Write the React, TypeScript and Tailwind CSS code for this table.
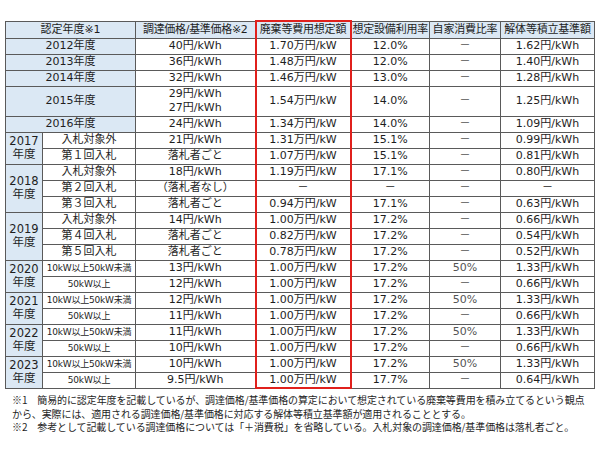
import React from 'react';

type Row = {
  year?: string;
  yearSpan?: number;
  label?: string;
  small?: boolean;
  price: React.ReactNode;
  cost: string;
  rate: string;
  self: string;
  fund: string;
  tall?: boolean;
};

const D = '－';

const rows: Row[] = [
  { year: '2012年度', price: '40円/kWh', cost: '1.70万円/kW', rate: '12.0%', self: D, fund: '1.62円/kWh' },
  { year: '2013年度', price: '36円/kWh', cost: '1.48万円/kW', rate: '12.0%', self: D, fund: '1.40円/kWh' },
  { year: '2014年度', price: '32円/kWh', cost: '1.46万円/kW', rate: '13.0%', self: D, fund: '1.28円/kWh' },
  {
    year: '2015年度',
    price: (
      <>
        29円/kWh
        <br />
        27円/kWh
      </>
    ),
    cost: '1.54万円/kW',
    rate: '14.0%',
    self: D,
    fund: '1.25円/kWh',
    tall: true,
  },
  { year: '2016年度', price: '24円/kWh', cost: '1.34万円/kW', rate: '14.0%', self: D, fund: '1.09円/kWh' },
  { year: '2017', yearSpan: 2, label: '入札対象外', price: '21円/kWh', cost: '1.31万円/kW', rate: '15.1%', self: D, fund: '0.99円/kWh' },
  { label: '第１回入札', price: '落札者ごと', cost: '1.07万円/kW', rate: '15.1%', self: D, fund: '0.81円/kWh' },
  { year: '2018', yearSpan: 3, label: '入札対象外', price: '18円/kWh', cost: '1.19万円/kW', rate: '17.1%', self: D, fund: '0.80円/kWh' },
  { label: '第２回入札', price: '（落札者なし）', cost: D, rate: D, self: D, fund: D },
  { label: '第３回入札', price: '落札者ごと', cost: '0.94万円/kW', rate: '17.1%', self: D, fund: '0.63円/kWh' },
  { year: '2019', yearSpan: 3, label: '入札対象外', price: '14円/kWh', cost: '1.00万円/kW', rate: '17.2%', self: D, fund: '0.66円/kWh' },
  { label: '第４回入札', price: '落札者ごと', cost: '0.82万円/kW', rate: '17.2%', self: D, fund: '0.54円/kWh' },
  { label: '第５回入札', price: '落札者ごと', cost: '0.78万円/kW', rate: '17.2%', self: D, fund: '0.52円/kWh' },
  { year: '2020', yearSpan: 2, label: '10kW以上50kW未満', small: true, price: '13円/kWh', cost: '1.00万円/kW', rate: '17.2%', self: '50%', fund: '1.33円/kWh' },
  { label: '50kW以上', small: true, price: '12円/kWh', cost: '1.00万円/kW', rate: '17.2%', self: D, fund: '0.66円/kWh' },
  { year: '2021', yearSpan: 2, label: '10kW以上50kW未満', small: true, price: '12円/kWh', cost: '1.00万円/kW', rate: '17.2%', self: '50%', fund: '1.33円/kWh' },
  { label: '50kW以上', small: true, price: '11円/kWh', cost: '1.00万円/kW', rate: '17.2%', self: D, fund: '0.66円/kWh' },
  { year: '2022', yearSpan: 2, label: '10kW以上50kW未満', small: true, price: '11円/kWh', cost: '1.00万円/kW', rate: '17.2%', self: '50%', fund: '1.33円/kWh' },
  { label: '50kW以上', small: true, price: '10円/kWh', cost: '1.00万円/kW', rate: '17.2%', self: D, fund: '0.66円/kWh' },
  { year: '2023', yearSpan: 2, label: '10kW以上50kW未満', small: true, price: '10円/kWh', cost: '1.00万円/kW', rate: '17.2%', self: '50%', fund: '1.33円/kWh' },
  { label: '50kW以上', small: true, price: '9.5円/kWh', cost: '1.00万円/kW', rate: '17.7%', self: D, fund: '0.64円/kWh' },
];

const cell = 'border border-[#5a5a5a] p-0 text-center align-middle whitespace-nowrap';
const blue = 'bg-[#dbe8f4]';
const red = 'border-x-2 border-x-[#e0201c]';

export default function App() {
  return (
    <div className="w-[600px] h-[450px] bg-white pt-[20px] pl-[5px] text-[#1e1e1e]">
      <table
        className="table-fixed border-collapse w-[589px] text-[11px] leading-[14px]"
        style={{ fontFamily: '"DejaVu Sans", "Noto Sans CJK JP", sans-serif' }}
      >
        <colgroup>
          <col className="w-[37px]" />
          <col className="w-[93px]" />
          <col className="w-[120px]" />
          <col className="w-[95px]" />
          <col className="w-[79px]" />
          <col className="w-[71px]" />
          <col className="w-[94px]" />
        </colgroup>
        <thead>
          <tr className="h-[17px]">
            <th colSpan={2} className={`${cell} ${blue} font-normal`}>認定年度※1</th>
            <th className={`${cell} ${blue} font-normal tracking-[-0.3px]`}>調達価格/基準価格※2</th>
            <th className={`${cell} ${blue} ${red} border-t-2 border-t-[#e0201c] font-normal tracking-[-0.2px]`}>廃棄等費用想定額</th>
            <th className={`${cell} ${blue} font-normal tracking-[-0.2px]`}>想定設備利用率</th>
            <th className={`${cell} ${blue} font-normal tracking-[-0.2px]`}>自家消費比率</th>
            <th className={`${cell} ${blue} font-normal tracking-[-0.2px]`}>解体等積立基準額</th>
          </tr>
        </thead>
        <tbody>
          {rows.map((r, i) => {
            const last = i === rows.length - 1;
            return (
              <tr key={i} className={r.tall ? 'h-[30px]' : 'h-[16px]'}>
                {r.year && !r.label && (
                  <td colSpan={2} className={`${cell} ${blue}`}>{r.year}</td>
                )}
                {r.year && r.label && (
                  <td rowSpan={r.yearSpan} className={`${cell} ${blue} text-[11.5px] leading-[13px]`}>
                    {r.year}
                    <br />
                    年度
                  </td>
                )}
                {r.label && (
                  <td className={`${cell} ${r.small ? 'text-[9px] tracking-[-0.2px]' : ''}`}>{r.label}</td>
                )}
                <td className={cell}>{r.price}</td>
                <td className={`${cell} ${red} ${last ? 'border-b-2 border-b-[#e0201c]' : ''}`}>{r.cost}</td>
                <td className={cell}>{r.rate}</td>
                <td className={`${cell} text-[#555]`}>{r.self}</td>
                <td className={cell}>{r.fund}</td>
              </tr>
            );
          })}
        </tbody>
      </table>
      <div
        className="mt-[4px] pl-[7px] text-[10px] leading-[13.5px] tracking-[-0.1px]"
        style={{ fontFamily: '"Noto Sans CJK JP", "Noto Sans", sans-serif' }}
      >
        <p>※1　簡易的に認定年度を記載しているが、調達価格/基準価格の算定において想定されている廃棄等費用を積み立てるという観点</p>
        <p>から、実際には、適用される調達価格/基準価格に対応する解体等積立基準額が適用されることとする。</p>
        <p>※2　参考として記載している調達価格については「＋消費税」を省略している。入札対象の調達価格/基準価格は落札者ごと。</p>
      </div>
    </div>
  );
}
